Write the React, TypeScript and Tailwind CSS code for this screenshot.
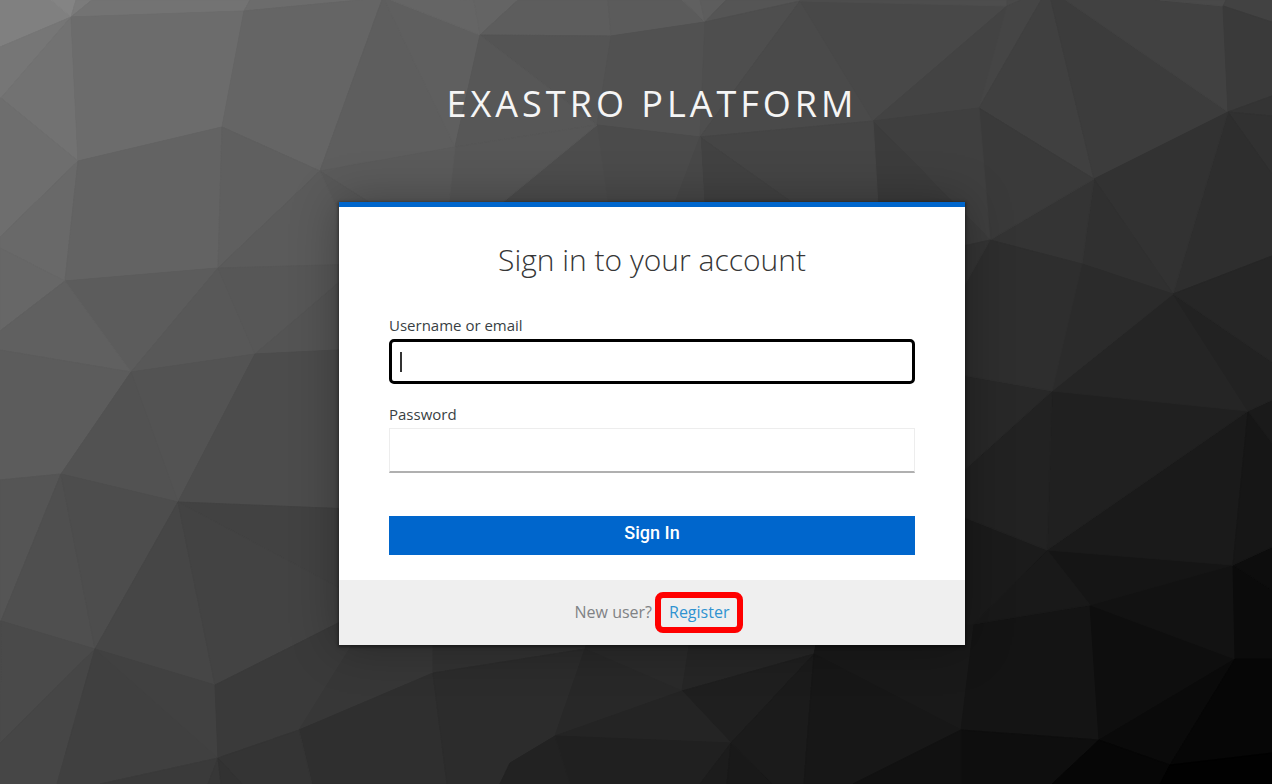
const facets: [string, string][] = [
  ["0,0 51,0 71,17 0,47", "#808080"],
  ["51,0 76,0 71,17", "#848484"],
  ["76,0 92,0 71,17", "#7b7b7b"],
  ["0,47 71,17 1,98 0,98", "#767676"],
  ["71,17 78,161 1,98", "#727272"],
  ["92,0 250,0 244,11 71,17", "#737373"],
  ["71,17 244,11 222,127 78,161", "#6c6c6c"],
  ["250,0 360,0 244,11", "#6c6c6c"],
  ["244,11 360,0 383,-3 320,171 222,127", "#656565"],
  ["383,-3 455,147 320,171", "#5e5e5e"],
  ["383,-3 480,35 455,147", "#5f5f5f"],
  ["383,-3 474,0 480,35", "#656565"],
  ["474,0 518,0 480,35", "#646464"],
  ["518,0 608,0 611,36 480,35", "#5d5d5d"],
  ["608,0 682,0 705,22 611,36", "#5b5b5b"],
  ["682,0 700,0 705,22", "#606060"],
  ["700,0 726,0 705,22", "#5d5d5d"],
  ["726,0 803,0 705,22", "#555555"],
  ["480,35 611,36 597,125", "#545454"],
  ["480,35 597,125 455,147", "#575757"],
  ["611,36 705,22 700,137 597,125", "#515151"],
  ["705,22 800,1 700,137", "#4e4e4e"],
  ["800,1 873,121 700,137", "#4a4a4a"],
  ["800,1 1007,6 873,121", "#484848"],
  ["800,1 800,0 1007,0 1007,6", "#4d4d4d"],
  ["1007,0 1048,-3 1007,6", "#494949"],
  ["1007,6 979,108 873,121", "#434343"],
  ["1007,6 1048,-12 979,108", "#454545"],
  ["1048,-12 1094,179 979,108", "#404040"],
  ["1048,-12 1228,112 1094,179", "#3c3c3c"],
  ["1048,-12 1160,0 1223,6 1228,112", "#414141"],
  ["1160,0 1226,0 1223,6", "#494949"],
  ["1226,0 1272,0 1272,22 1223,6", "#424242"],
  ["1223,6 1272,22 1272,96 1228,112", "#3a3a3a"],
  ["1228,112 1272,96 1272,116", "#343434"],
  ["1228,112 1272,116 1272,174", "#313131"],
  ["1228,112 1272,174 1272,256 1173,294", "#2e2e2e"],
  ["1228,112 1173,294 1094,179", "#323232"],
  ["1094,179 1173,294 1082,264", "#303030"],
  ["1094,179 1082,264 990,240", "#343434"],
  ["979,108 1094,179 990,240", "#3a3a3a"],
  ["873,121 979,108 990,240", "#3f3f3f"],
  ["873,121 990,240 965,246 880,240", "#3c3c3c"],
  ["700,137 873,121 880,240 845,240", "#454545"],
  ["700,137 845,240 706,240", "#424242"],
  ["597,125 700,137 706,240 660,240 613,240", "#4b4b4b"],
  ["700,137 706,240 661,240", "#484848"],
  ["597,125 613,240 457,240", "#4d4d4d"],
  ["455,147 597,125 457,240 445,240", "#575757"],
  ["320,171 455,147 445,240 390,215", "#5b5b5b"],
  ["320,171 400,222 400,350", "#585858"],
  ["0,98 1,98 78,161 0,237", "#6e6e6e"],
  ["0,237 78,161 65,281 0,248", "#696969"],
  ["0,248 65,281 0,331", "#676767"],
  ["78,161 222,127 218,268 65,281", "#636363"],
  ["222,127 320,171 218,268", "#5f5f5f"],
  ["320,171 370,280 218,268", "#5b5b5b"],
  ["65,281 218,268 131,372", "#5c5c5c"],
  ["0,331 65,281 131,372 0,350", "#606060"],
  ["0,350 131,372 61,474 0,480", "#5c5c5c"],
  ["218,268 131,372 255,354", "#585858"],
  ["218,268 400,263 400,230 255,354", "#575757"],
  ["255,354 370,256 400,347", "#545454"],
  ["131,372 255,354 178,502", "#535353"],
  ["131,372 178,502 61,474", "#525252"],
  ["255,354 400,347 400,511 178,502", "#4c4c4c"],
  ["0,480 61,474 1,621 0,621", "#555555"],
  ["61,474 95,649 1,621", "#4f4f4f"],
  ["61,474 178,502 95,649", "#4d4d4d"],
  ["178,502 95,649 215,685", "#464646"],
  ["178,502 400,511 400,620", "#424242"],
  ["178,502 400,620 400,592 215,685", "#434343"],
  ["1,621 95,649 0,743", "#4a4a4a"],
  ["0,621 1,621 0,743", "#4a4a4a"],
  ["0,743 95,649 57,784 0,784", "#464646"],
  ["95,649 218,758 100,784 57,784", "#404040"],
  ["95,649 215,685 218,758", "#414141"],
  ["215,685 400,592 299,730 218,758", "#3a3a3a"],
  ["299,730 380,600 433,600 433,673", "#373737"],
  ["299,730 433,673 447,784 312,784", "#2f2f2f"],
  ["218,758 299,730 312,784 242,784", "#343434"],
  ["218,758 100,784 208,784", "#3a3a3a"],
  ["218,758 208,784 221,784", "#373737"],
  ["218,758 221,784 242,784", "#323232"],
  ["433,600 600,600 585,649 433,673", "#323232"],
  ["433,673 585,649 555,736 510,763 500,784 447,784", "#2c2c2c"],
  ["585,649 600,600 690,640 682,691", "#2a2a2a"],
  ["585,649 682,691 555,736", "#282828"],
  ["690,640 825,640 814,654 682,691", "#262626"],
  ["682,691 814,654 731,743", "#1f1f1f"],
  ["555,736 682,691 731,743", "#242424"],
  ["555,736 731,743 700,784 570,784", "#202020"],
  ["510,763 555,736 570,784 500,784", "#222222"],
  ["731,743 700,784 727,784", "#1c1c1c"],
  ["731,743 727,784 773,784", "#191919"],
  ["814,654 731,743 773,784 804,784", "#1b1b1b"],
  ["814,654 825,600 974,624 961,730", "#191919"],
  ["814,654 961,730 853,784 804,784", "#171717"],
  ["974,624 1090,605 1099,740 961,730", "#141414"],
  ["961,730 1099,740 1052,784 961,784", "#0e0e0e"],
  ["853,784 961,730 961,784", "#111111"],
  ["1090,605 1235,659 1099,740", "#0e0e0e"],
  ["1090,605 1233,565 1235,659", "#121212"],
  ["1233,565 1272,590 1272,659 1235,659", "#0b0b0b"],
  ["1233,565 1272,547 1272,590", "#0d0d0d"],
  ["1099,740 1235,659 1170,765", "#0a0a0a"],
  ["1099,740 1170,765 1160,784 1052,784", "#060606"],
  ["1235,659 1272,659 1272,753 1170,765", "#060606"],
  ["1170,765 1272,753 1272,784 1160,784", "#010101"],
  ["1047,550 1233,565 1090,605", "#151515"],
  ["1047,550 1090,605 974,624", "#191919"],
  ["900,488 1047,550 974,624 900,632", "#1b1b1b"],
  ["1248,411 1233,565 1047,550", "#1a1a1a"],
  ["1248,411 1272,443 1272,547 1233,565", "#161616"],
  ["1248,411 1272,400 1272,443", "#1a1a1a"],
  ["1052,391 1248,411 1047,550", "#202020"],
  ["900,528 1052,391 1047,550 900,492", "#222222"],
  ["900,364 1052,391 900,528", "#282828"],
  ["1173,294 1248,411 1052,391", "#252525"],
  ["1173,294 1272,362 1272,400 1248,411", "#222222"],
  ["1173,294 1272,256 1272,362", "#262626"],
  ["1082,264 1173,294 1052,391", "#2b2b2b"],
  ["990,240 1082,264 1052,391 900,364", "#2e2e2e"],
  ["900,260 990,240 900,400", "#343434"],
];

function Backdrop() {
  return (
    <svg
      aria-hidden="true"
      className="absolute inset-0 h-full w-full"
      viewBox="0 0 1272 784"
      preserveAspectRatio="xMidYMid slice"
    >
      {facets.map(([points, color]) => (
        <polygon key={points} points={points} fill={color} stroke={color} strokeWidth={1} strokeLinejoin="round" />
      ))}
    </svg>
  );
}

export default function App() {
  return (
    <div className="relative flex min-h-screen flex-col bg-[#3a3a3a] font-['Open_Sans','Noto_Sans',sans-serif]">
      <Backdrop />
      <div className="relative flex flex-col items-center pt-20 pb-12 pl-8">
        <header className="text-center text-[36px] leading-[48px] tracking-[4px] text-[#f5f5f5] uppercase">
          Exastro Platform
        </header>
        <main className="mt-[74px] w-full max-w-[626px] border-t-[5px] border-[#0066cc] bg-white shadow-[0_1px_3px_1px_rgba(3,3,3,0.4),0_0_45px_rgba(3,3,3,0.3)]">
          <h1 className="pt-[33px] text-center text-[30px] leading-[40px] font-light text-[#363636]">
            Sign in to your account
          </h1>
          <form className="px-[50px] pt-[35px] pb-[25px]" onSubmit={(e) => e.preventDefault()}>
            <label htmlFor="username" className="block pb-1 text-[15px] leading-5 text-[#393f44]">
              Username or email
            </label>
            <div className="relative">
              <input
                id="username"
                type="text"
                className="block h-[45px] w-full rounded-[5px] border-[3px] border-black bg-white px-2 text-lg text-[#151515] caret-transparent outline-none"
              />
              <span aria-hidden="true" className="absolute top-[13px] left-[11px] h-5 w-0.5 bg-[#333333]" />
            </div>
            <label htmlFor="password" className="mt-5 block pb-1 text-[15px] leading-5 text-[#393f44]">
              Password
            </label>
            <input
              id="password"
              type="password"
              className="block h-[45px] w-full border border-[#ededed] border-b-2 border-b-[#b0b0b0] bg-white px-2 text-lg text-[#151515] outline-none"
            />
            <button
              type="submit"
              className="mt-[43px] block h-[39px] w-full bg-[#0066cc] pb-1.5 font-[Roboto,sans-serif] text-[18px] leading-6 font-medium text-white"
            >
              Sign In
            </button>
          </form>
          <div className="flex items-center justify-center gap-[17px] bg-[#efefef] py-5 text-[16px] leading-[25px] text-[#808285]">
            <span>New user?</span>
            <a href="#register" className="relative text-[#2f93d1]">
              Register
              <span
                aria-hidden="true"
                className="absolute -inset-x-3.5 -inset-y-2 rounded-[8px] border-[6px] border-[#ff0000]"
              />
            </a>
          </div>
        </main>
      </div>
    </div>
  );
}
